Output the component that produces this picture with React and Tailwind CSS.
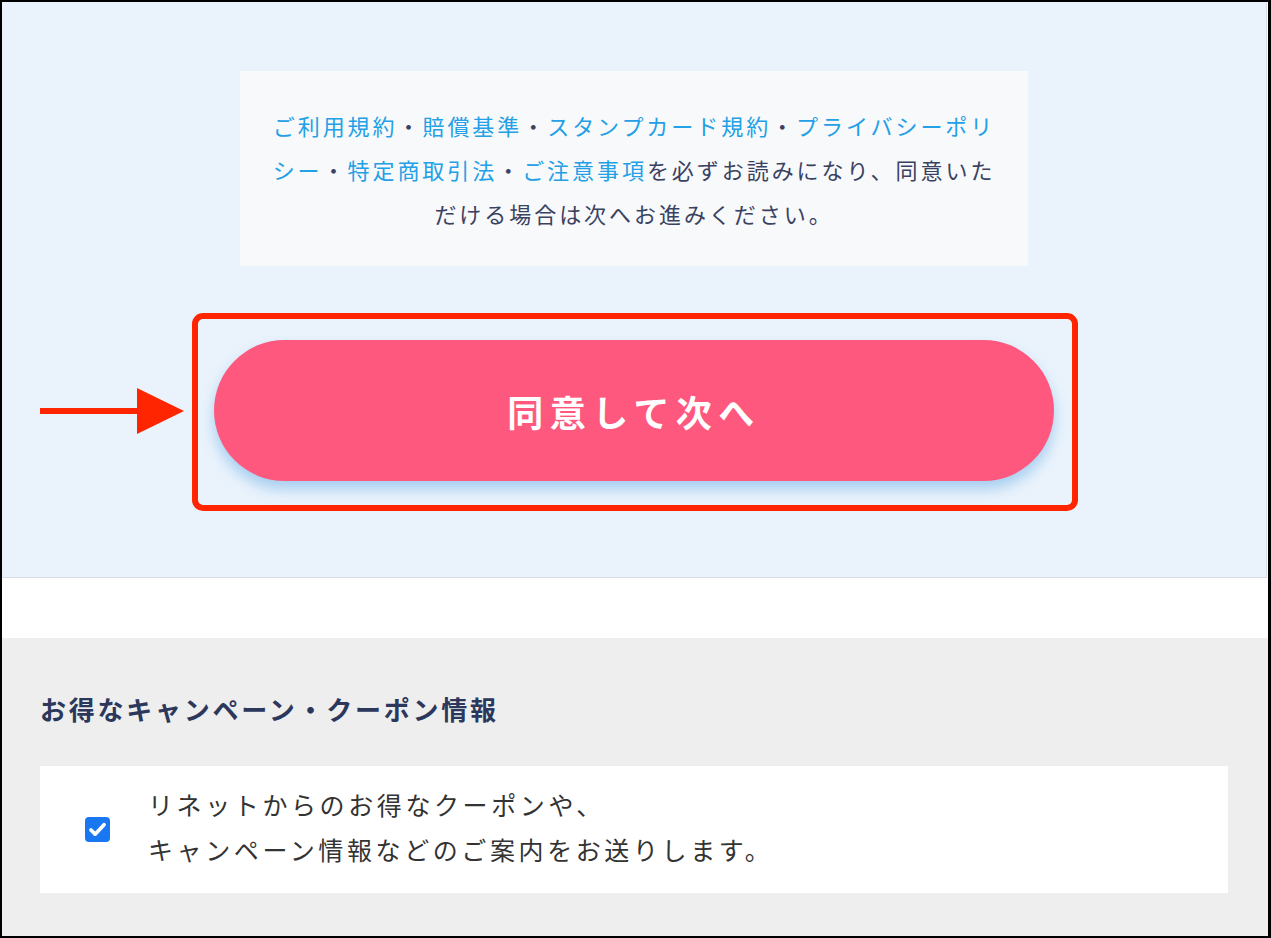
import React from 'react';

const FONT = { fontFamily: '"Noto Sans CJK JP", "Noto Sans", sans-serif' };

const Link = ({ children }) => <span className="text-[#23a0e6]">{children}</span>;

const Arrow = () => (
  <svg className="absolute left-[-174px] top-[48px]" width="146" height="46" viewBox="0 0 146 46">
    <rect x="0" y="20" width="104" height="6" fill="#ff2500" />
    <polygon points="97,0 144,23 97,46" fill="#ff2500" />
  </svg>
);

const Check = () => (
  <span className="flex h-[25px] w-[25px] shrink-0 items-center justify-center rounded-[4px] bg-[#1a77f2]">
    <svg width="21" height="21" viewBox="0 0 24 24" fill="none">
      <path d="M4.5 12.5l4.8 4.8L19.5 6.5" stroke="white" strokeWidth="4.2" strokeLinecap="round" strokeLinejoin="round" />
    </svg>
  </span>
);

export default function App() {
  return (
    <div className="h-[938px] w-[1271px] overflow-hidden border-2 border-r-[3px] border-black bg-white" style={FONT}>
      {/* agreement area */}
      <section className="mr-[1px] border-b border-r border-[#d6dde4] bg-[#eaf3fc] pt-[69px] pb-[96px]">
        <div className="ml-[238px] flex h-[195px] w-[788px] flex-col items-center justify-center bg-[#f8f9fa] text-center text-[22px] leading-[44px] tracking-[2.95px] text-[#3a4262]">
          <p className="whitespace-nowrap">
            <Link>ご利用規約</Link>・<Link>賠償基準</Link>・<Link>スタンプカード規約</Link>・<Link>プライバシーポリ</Link>
          </p>
          <p className="whitespace-nowrap">
            <Link>シー</Link>・<Link>特定商取引法</Link>・<Link>ご注意事項</Link>を必ずお読みになり、同意いた
          </p>
          <p className="whitespace-nowrap">だける場合は次へお進みください。</p>
        </div>

        <div className="relative ml-[212px] mt-[74px] w-[840px]">
          <Arrow />
          <button className="flex h-[141px] w-[840px] items-center justify-center rounded-full bg-[#ff587e] text-[36px] font-bold tracking-[6.4px] text-white shadow-[0_8px_14px_rgba(110,175,230,0.55)]">
            同意して次へ
          </button>
          <div className="pointer-events-none absolute left-[-22px] top-[-27px] h-[198px] w-[886px] rounded-[11px] border-[6px] border-[#ff2500]" />
        </div>
      </section>

      <div className="h-[60px]" />

      {/* campaign opt-in */}
      <section className="h-[300px] bg-[#eeeeee] px-[38px] pt-[53px]">
        <h2 className="text-[26px] font-bold leading-[36px] tracking-[2.75px] text-[#2c375c]">
          お得なキャンペーン・クーポン情報
        </h2>
        <div className="mt-[39px] flex h-[127px] w-[1188px] items-center bg-white pl-[45px]">
          <Check />
          <p className="ml-[38px] pb-[6px] text-[25px] leading-[45px] tracking-[3.6px] text-[#333333]">
            リネットからのお得なクーポンや、
            <br />
            キャンペーン情報などのご案内をお送りします。
          </p>
        </div>
      </section>
    </div>
  );
}
